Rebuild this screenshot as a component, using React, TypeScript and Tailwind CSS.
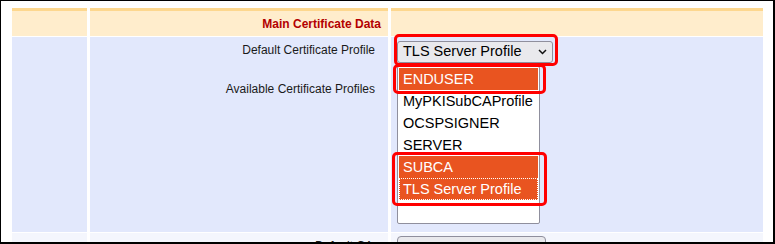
import React from 'react';

const OPTIONS = [
  { label: 'ENDUSER', selected: true },
  { label: 'MyPKISubCAProfile', selected: false },
  { label: 'OCSPSIGNER', selected: false },
  { label: 'SERVER', selected: false },
  { label: 'SUBCA', selected: true },
  { label: 'TLS Server Profile', selected: true, focused: true },
];

const Chevron: React.FC = () => (
  <svg width="9" height="6" viewBox="0 0 9 6" fill="none">
    <path d="M1 1l3.5 3.5L8 1" stroke="#111" strokeWidth="1.5" />
  </svg>
);

const App: React.FC = () => {
  return (
    <div className="relative w-[775px] h-[244px] overflow-hidden bg-white border-t border-l border-r-2 border-b-2 border-black font-['Liberation_Sans',Arial,sans-serif]">
      <div className="pl-[11px] pt-[7px]">
        <div className="grid grid-cols-[75px_298px_372px] gap-x-[3px] gap-y-px">
          {/* header row */}
          <div className="h-[28px] bg-[#ffedcc] border-t-[3px] border-[#fdd78e]"></div>
          <div className="h-[28px] bg-[#ffedcc] border-t-[3px] border-[#fdd78e] flex items-center justify-end pr-[7px] text-[12px] font-bold text-[#b30000]">
            Main Certificate Data
          </div>
          <div className="h-[28px] bg-[#ffedcc] border-t-[3px] border-[#fdd78e]"></div>

          {/* profiles row */}
          <div className="h-[195px] bg-[#e2e8fc]"></div>
          <div className="h-[195px] bg-[#e2e8fc] pt-[6px] pr-[13px] text-right text-[12px] leading-[14px] text-[#1a1a1a]">
            <div>Default Certificate Profile</div>
            <div className="mt-[25px]">Available Certificate Profiles</div>
          </div>
          <div className="h-[195px] bg-[#e2e8fc] pt-[4px] pl-[6px]">
            <div className="w-[156px] h-[22px] flex items-center justify-between px-[5px] bg-[#e9e9ed] border border-[#8f8f9d] rounded-[3px] text-[14.5px] text-black">
              <span>TLS Server Profile</span>
              <Chevron />
            </div>
            <div className="mt-[3px] w-[143px] h-[158px] p-px bg-white border border-[#8f8f9d] rounded-[2px] text-[14.5px]">
              {OPTIONS.map((o) => (
                <div
                  key={o.label}
                  className={
                    o.selected
                      ? 'h-[22px] leading-[20px] pl-[3px] bg-[#e95420] text-white border border-transparent' +
                        (o.focused ? ' border-dotted border-white' : '')
                      : 'h-[22px] leading-[20px] pl-[3px] text-black border border-transparent'
                  }
                >
                  {o.label}
                </div>
              ))}
            </div>
          </div>

          {/* default CA row */}
          <div className="h-[30px] bg-[#f4f6fd]"></div>
          <div className="h-[30px] bg-[#f4f6fd] pt-[6px] pr-[15px] text-right text-[12px] leading-[14px] text-[#1a1a1a]">
            Default CA
          </div>
          <div className="h-[30px] bg-[#f4f6fd] pt-[3px] pl-[6px]">
            <div className="w-[149px] h-[22px] bg-[#e9e9ed] border border-[#8f8f9d] rounded-[4px]"></div>
          </div>
        </div>
      </div>

      {/* red annotation marks */}
      <div className="absolute left-[393px] top-[33px] w-[164px] h-[32px] border-[3px] border-[#ff0000] rounded-[5px]"></div>
      <div className="absolute left-[392px] top-[63px] w-[153px] h-[30px] border-[3px] border-[#ff0000] rounded-[5px]"></div>
      <div className="absolute left-[391px] top-[151px] w-[155px] h-[54px] border-[3px] border-[#ff0000] rounded-[5px]"></div>
    </div>
  );
};

export default App;
